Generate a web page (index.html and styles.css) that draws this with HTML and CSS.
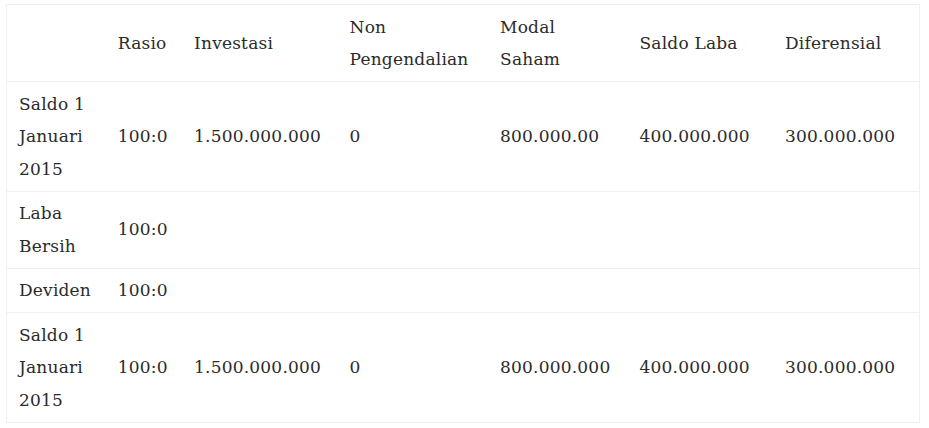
FILE: index.html
```html
<!DOCTYPE html>
<html>
<head>
<meta charset="utf-8">
<link rel="stylesheet" href="styles.css">
</head>
<body>
<div class="wrap">
<table class="tbl">
  <colgroup>
    <col class="c1"><col class="c2"><col class="c3"><col class="c4"><col class="c5"><col class="c6"><col class="c7">
  </colgroup>
  <thead>
    <tr>
      <th></th>
      <th>Rasio</th>
      <th>Investasi</th>
      <th>Non Pengendalian</th>
      <th>Modal Saham</th>
      <th>Saldo Laba</th>
      <th>Diferensial</th>
    </tr>
  </thead>
  <tbody>
    <tr>
      <td>Saldo 1 Januari 2015</td>
      <td>100:0</td>
      <td>1.500.000.000</td>
      <td>0</td>
      <td>800.000.00</td>
      <td>400.000.000</td>
      <td>300.000.000</td>
    </tr>
    <tr>
      <td>Laba Bersih</td>
      <td>100:0</td>
      <td></td><td></td><td></td><td></td><td></td>
    </tr>
    <tr>
      <td>Deviden</td>
      <td>100:0</td>
      <td></td><td></td><td></td><td></td><td></td>
    </tr>
    <tr>
      <td>Saldo 1 Januari 2015</td>
      <td>100:0</td>
      <td>1.500.000.000</td>
      <td>0</td>
      <td>800.000.000</td>
      <td>400.000.000</td>
      <td>300.000.000</td>
    </tr>
  </tbody>
</table>
</div>
</body>
</html>
```
FILE: styles.css
```css
html, body {
  margin: 0;
  padding: 0;
  background: #ffffff;
}
.wrap {
  padding: 4px 0 0 6px;
}
.tbl {
  border-collapse: collapse;
  table-layout: fixed;
  width: 914px;
  border: 1px solid #efefef;
  font-family: "DejaVu Serif", "Liberation Serif", serif;
  font-size: 17px;
  letter-spacing: 0.2px;
  line-height: 32.5px;
  color: #2b2b2b;
}
.c1 { width: 99px; }
.c2 { width: 76px; }
.c3 { width: 155px; }
.c4 { width: 150px; }
.c5 { width: 139px; }
.c6 { width: 145px; }
.c7 { width: 146px; }
.tbl th, .tbl td {
  padding: 5.5px 12px;
  text-align: left;
  vertical-align: middle;
  font-weight: normal;
  border-top: 1px solid #efefef;
  overflow-wrap: normal;
}
.tbl thead th {
  border-top: none;
}
```
